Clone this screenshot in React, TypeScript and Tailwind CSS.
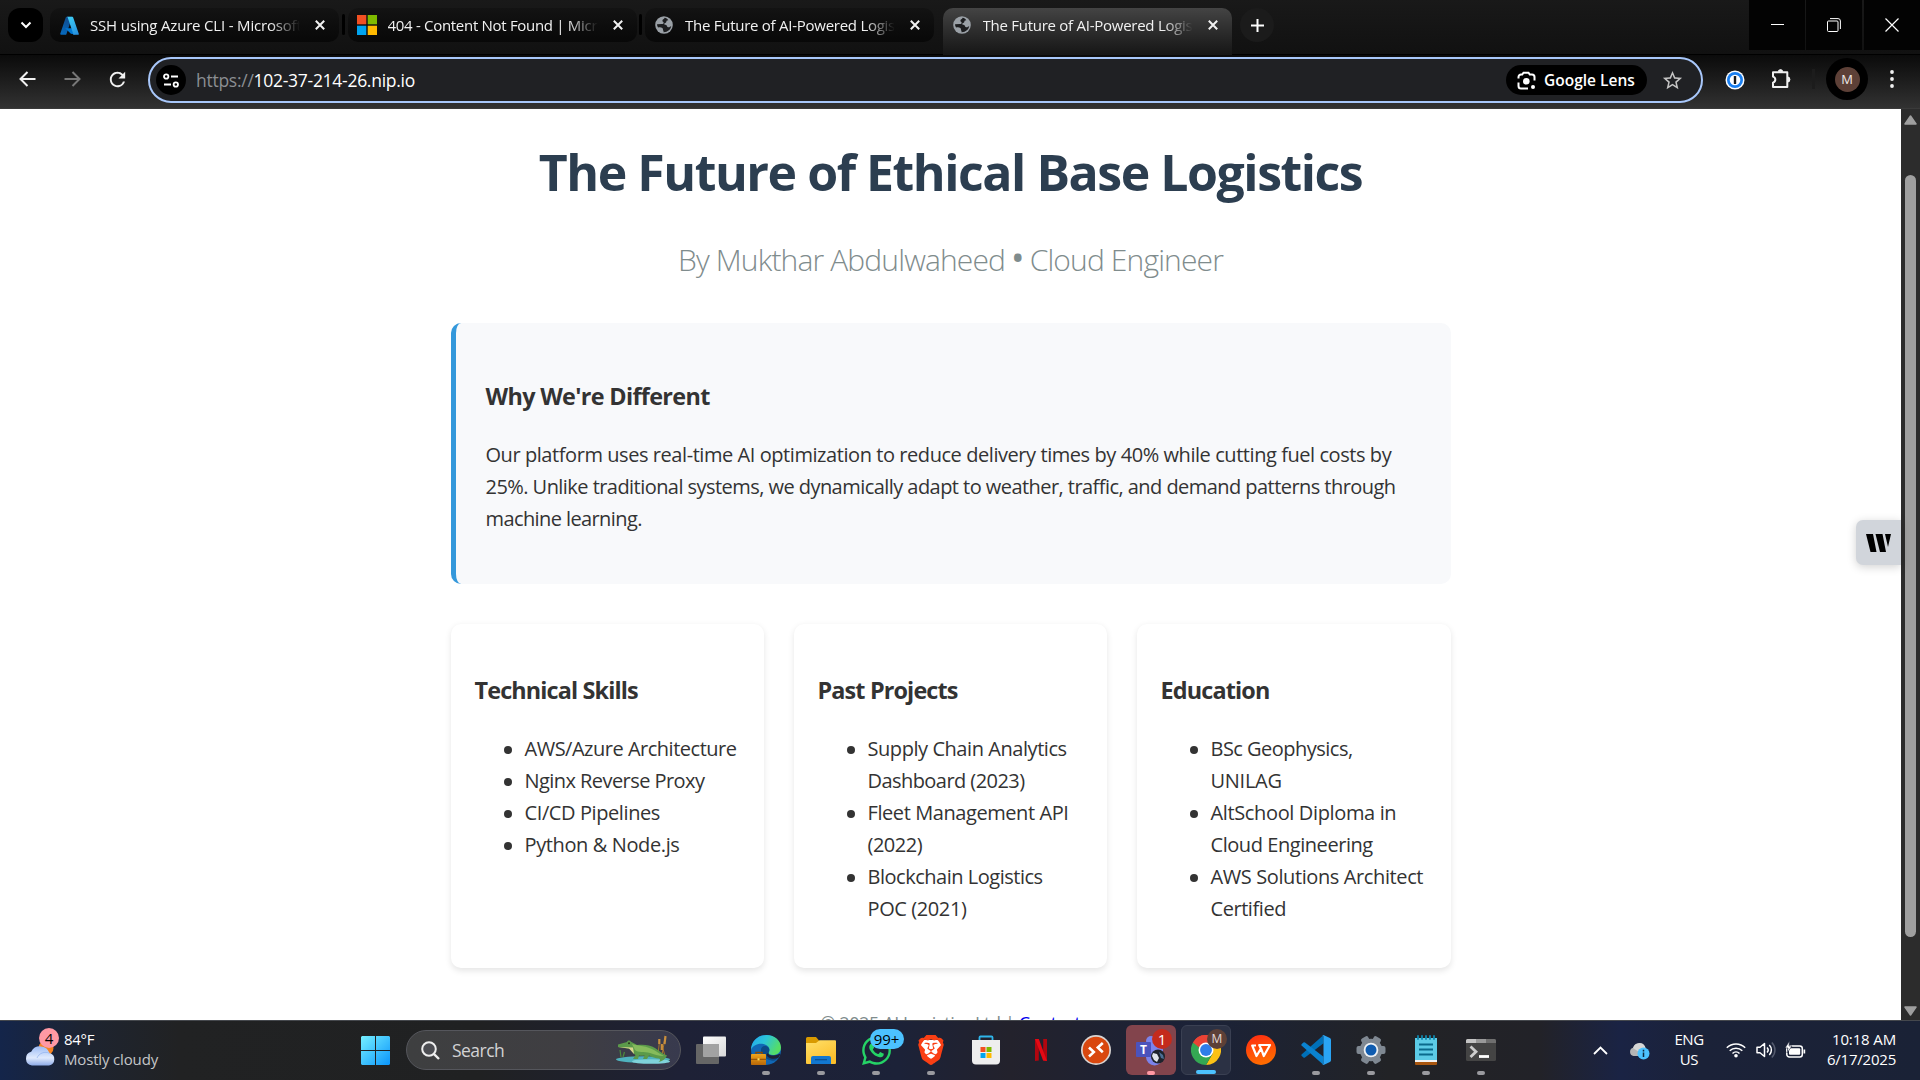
import React from 'react';
import { FaWhatsapp } from 'react-icons/fa';
import { SiBrave } from 'react-icons/si';
import { MdRefresh, MdStarBorder } from 'react-icons/md';

/* ---------- browser icons ---------- */

const AzureIcon = () => (
  <svg width="19" height="19" viewBox="0 0 96 96">
    <defs>
      <linearGradient id="azA" x1="0.6" y1="0" x2="0.3" y2="1">
        <stop offset="0" stopColor="#114a8b" />
        <stop offset="1" stopColor="#0669bc" />
      </linearGradient>
      <linearGradient id="azB" x1="0.3" y1="0" x2="0.7" y2="1">
        <stop offset="0" stopColor="#3ccbf4" />
        <stop offset="1" stopColor="#2892df" />
      </linearGradient>
    </defs>
    <path d="M33.3 4h28.4L32.3 91.8a4.5 4.5 0 0 1-4.3 3.1H5.9a4.5 4.5 0 0 1-4.3-6L29 7a4.5 4.5 0 0 1 4.3-3z" fill="url(#azA)" />
    <path d="M71 62H26l29 28 22 4z" fill="#0078d4" />
    <path d="M66.6 7a4.5 4.5 0 0 0-4.3-3H34.6a4.5 4.5 0 0 1 4.3 3l27.5 82a4.5 4.5 0 0 1-4.3 6h28a4.5 4.5 0 0 0 4.3-6z" fill="url(#azB)" />
  </svg>
);

const MicrosoftIcon = () => (
  <svg width="20" height="20" viewBox="0 0 20 20">
    <rect width="9.3" height="9.3" fill="#f25022" />
    <rect x="10.7" width="9.3" height="9.3" fill="#7fba00" />
    <rect y="10.7" width="9.3" height="9.3" fill="#00a4ef" />
    <rect x="10.7" y="10.7" width="9.3" height="9.3" fill="#ffb900" />
  </svg>
);

const GlobeIcon = () => (
  <svg width="18" height="18" viewBox="0 0 18 18">
    <circle cx="9" cy="9" r="8.8" fill="#9aa0a6" />
    <path d="M9.6 1.8c-.4 1.500-2.200 1.500-2.200 2.900 0 1.300 1.300.9 1.300 2.100 0 1-.9 1.400-2 1.300L2 8.200c.1 1.500.5 2.400 1.100 3.300 1.400-.3 3.100-.3 4.200.4 1.200.8.3 1.800.9 2.600.5.6.4 1.200.3 1.700 4.300.1 7.200-2.800 7.700-6.200-1.100.6-1.700 1.600-3 1.300-1.400-.4-.9-2-2.100-2.400-1-.3-2-.1-1.800-1.200.2-1 1.400-.8 1.900-1.500.5-.8-.1-1.400.9-1.700l1.200-.3C12.400 2.700 11.200 2 9.600 1.800z" fill="#1c1d1f" />
  </svg>
);

const CloseX = () => (
  <svg width="10" height="10" viewBox="0 0 10 10" stroke="#f1f1f1" strokeWidth="2" fill="none">
    <path d="M0.800 0.800l8.400 8.400M9.200 0.800l-8.400 8.400" />
  </svg>
);

const LensIcon = () => (
  <svg width="19" height="19" viewBox="0 0 19 19" fill="none" stroke="#fff" strokeWidth="2">
    <path d="M1.500 7.500V6a2.500 2.500 0 0 1 2.500-2.500h1.200L6.500 1.700h5l1.300 1.800H15A2.500 2.500 0 0 1 17.500 6v3.500M1.500 11.500V15A2.500 2.500 0 0 0 4 17.500h7" />
    <circle cx="9.300" cy="10.300" r="3.300" fill="#fff" stroke="none" />
    <circle cx="16" cy="16" r="2" fill="#fff" stroke="none" />
  </svg>
);

const PuzzleIcon = () => (
  <svg width="22" height="22" viewBox="0 0 22 22" fill="none" stroke="#f1f1f1" strokeWidth="2" strokeLinejoin="round">
    <path d="M2 4.200h14.300v14.800H2v-4.400a3.100 3.100 0 0 0 0-6z" />
    <path d="M7.300 3.500a2.200 2.200 0 0 1 4.400 0zM17 9.300a2.200 2.200 0 0 1 0 4.400z" fill="#f1f1f1" stroke="none" />
    <path d="M7.800 3.800a1.900 1.900 0 0 1 3.600 0M16.800 9.500a2 2 0 0 1 0 3.900" />
  </svg>
);

/* ---------- taskbar icons ---------- */

const WeatherIcon = () => (
  <svg width="34" height="38" viewBox="0 0 34 38">
    <defs>
      <linearGradient id="cl" x1="0" y1="0" x2="0" y2="1">
        <stop offset="0" stopColor="#9dbcf5" />
        <stop offset="0.6" stopColor="#dfeafd" />
        <stop offset="1" stopColor="#8eabe8" />
      </linearGradient>
    </defs>
    <circle cx="22" cy="17" r="7.500" fill="#f58220" />
    <path d="M8 34.500a7 7 0 0 1-.8-13.700A10 10 0 0 1 25.500 22 6.400 6.400 0 0 1 25 34.500z" fill="url(#cl)" />
    <path d="M13 27c2-5 8-7 12.500-4.700" stroke="#8fb0ee" strokeWidth="1" fill="none" opacity=".7" />
  </svg>
);

const StartIcon = () => (
  <svg width="29" height="29" viewBox="0 0 29 29">
    <defs>
      <linearGradient id="st" x1="0" y1="0" x2="29" y2="29" gradientUnits="userSpaceOnUse">
        <stop offset="0" stopColor="#76f0ff" />
        <stop offset="1" stopColor="#0a95fb" />
      </linearGradient>
    </defs>
    <path d="M1 0h13v14H0V1zM15 0h13l1 1v13H15zM0 15h14v14H1l-1-1zM15 15h14v13l-1 1H15z" fill="url(#st)" />
  </svg>
);

const CrocodileIcon = () => (
  <svg width="58" height="30" viewBox="0 0 58 30">
    <g stroke="#a8742c" strokeWidth="1" fill="none">
      <path d="M43 20L44.500 6M47 20L50 3M50 21L47 10" />
      <path d="M44.300 9V4M49.500 9L50.500 1M46.800 15V9" stroke="#c98f3d" strokeWidth="2.200" />
    </g>
    <path d="M6 22L5 15M8 22L9.500 17" stroke="#4d8a3d" strokeWidth="1.200" />
    <ellipse cx="28" cy="24.500" rx="27" ry="3.200" fill="#4fb3bf" />
    <ellipse cx="36" cy="26.500" rx="19" ry="2.300" fill="#7fd3da" />
    <path d="M3 9.500l9-2.500c1-2 3-1.800 4-.2 2 .8 3.500 2 6 3.200 6-.5 13-.5 18 3 4 2.800 7 5.500 12 7.500-1.500 3.500-5 6-8.500 6.500 2-1.500 2-3 .5-3.500-4-.2-7-1.200-10-3l-2 3.500h-4l1.500-3.500c-2 .3-4 .3-5.500 0L23 24h-5l2.500-4c-2-1-3.500-3.500-5-6L3 12z" fill="#5b9a4a" />
    <path d="M17 9c7 2 15 2 22 6 4 2.500 7 4.500 10 6-6 0-10-2-14-3-6-1.500-12 0-15-3z" fill="#86bb5c" />
    <path d="M3 12l11 1.500 5 5.500-1-6.500z" fill="#d9d68c" />
    <circle cx="14" cy="8.200" r="1" fill="#2a3a18" />
  </svg>
);

const TaskViewIcon = () => (
  <svg width="30" height="30" viewBox="0 0 30 30">
    <defs>
      <linearGradient id="tv" x1="0" y1="0" x2="1" y2="1">
        <stop offset="0" stopColor="#fff" />
        <stop offset="1" stopColor="#d8d8d8" />
      </linearGradient>
    </defs>
    <rect x="0" y="9" width="23" height="20" rx="1" fill="#666" />
    <rect x="7" y="1.500" width="23" height="20" rx="1" fill="url(#tv)" />
    <rect x="7" y="9" width="16" height="12.500" fill="#a2a2a2" />
  </svg>
);

const EdgeIcon = () => (
  <svg width="32" height="32" viewBox="0 0 32 32">
    <defs>
      <linearGradient id="ed1" x1="0" y1="0" x2="1" y2="0.4">
        <stop offset="0" stopColor="#22a5f0" />
        <stop offset="0.5" stopColor="#2cc5d8" />
        <stop offset="1" stopColor="#55dd66" />
      </linearGradient>
      <linearGradient id="cs" x1="0" y1="0" x2="0" y2="1">
        <stop offset="0" stopColor="#f0a51c" />
        <stop offset="1" stopColor="#b86708" />
      </linearGradient>
    </defs>
    <circle cx="16" cy="16" r="15" fill="#1167b4" />
    <path d="M1 16C1 7 8 1 16.500 1 25 1 31 7 31 13.500c0 5-4 7.500-8 7.500-3 0-5-1-4.500-2.300C20.500 16 19.500 12 15 10.500 9 8.500 3 11 1 16z" fill="url(#ed1)" />
    <path d="M11 17c-.5-4 3-6 6-4.500 2.500 1.300 3 4 1.500 6.200-1 2 2 3.300 5 3 3-.2 5-1 6.500-2.200-1 3-3 5.500-5 7-6 1-13-3-14-9.500z" fill="#0d4a86" />
    <path d="M18.500 18.500c-1 2 2 3.300 5 3 2.500-.2 4.500-.8 6-1.800l.8.800-2 3.500c-6 2-11 0-11.800-3.500z" fill="#1f2136" />
    <path d="M6 20.500v-2h6v2" fill="none" stroke="#8a4a05" strokeWidth="1.500" />
    <rect x="1" y="20" width="15" height="11" rx="0.800" fill="url(#cs)" />
    <path d="M1 25.300h15" stroke="#8a4a05" />
    <rect x="7.500" y="24.300" width="2" height="2" fill="#ffe05c" />
  </svg>
);

const FolderIcon = () => (
  <svg width="30" height="30" viewBox="0 0 30 30">
    <defs>
      <linearGradient id="fo" x1="0" y1="0" x2="0.6" y2="1">
        <stop offset="0" stopColor="#ffe06a" />
        <stop offset="1" stopColor="#fcbf2a" />
      </linearGradient>
    </defs>
    <path d="M0 3.500A1.500 1.500 0 0 1 1.500 2H10l3 3.500V12H0z" fill="#d99a00" />
    <path d="M0 8h10l3.500-2.800H29a1 1 0 0 1 1 1V28a1 1 0 0 1-1 1H1a1 1 0 0 1-1-1z" fill="url(#fo)" />
    <path d="M5 29v-6a2 2 0 0 1 2-2h16a2 2 0 0 1 2 2v6z" fill="#1277cf" />
    <path d="M9 24.700h12" stroke="#0b4f8f" strokeWidth="1.200" />
  </svg>
);

const WhatsAppTile = () => (
  <span className="relative flex">
    <FaWhatsapp size={33} color="#25d366" />
    <span className="absolute left-[10px] -top-[5px] h-5 w-[34px] rounded-[10px] bg-[#4cc2ff] text-center text-[15px] leading-5 text-black">99+</span>
  </span>
);

const BraveTile = () => (
  <span className="relative flex h-[30px] w-[30px] items-center justify-center">
    <svg className="absolute inset-0" width="30" height="30" viewBox="0 0 30 30">
      <path d="M7 5h16l3 6-4 13-7 5-7-5L4 11z" fill="#fff" />
    </svg>
    <SiBrave size={30} color="#fa3f14" className="relative" />
  </span>
);

const StoreIcon = () => (
  <svg width="30" height="30" viewBox="0 0 30 30">
    <path d="M8.500 6V2.500a1 1 0 0 1 1-1h11a1 1 0 0 1 1 1V6" fill="none" stroke="#2fb5ea" strokeWidth="1.800" />
    <path d="M1 5h28v20.500a4 4 0 0 1-4 4H5a4 4 0 0 1-4-4z" fill="#eeeeee" />
    <rect x="9.500" y="12" width="5" height="5" fill="#f25022" />
    <rect x="15.500" y="12" width="5" height="5" fill="#7fba00" />
    <rect x="9.500" y="18" width="5" height="5" fill="#00a4ef" />
    <rect x="15.500" y="18" width="5" height="5" fill="#ffb900" />
  </svg>
);

const NetflixIcon = () => (
  <svg width="12" height="22" viewBox="0 0 12 22">
    <path d="M0 0h3.800v21.500L0 22zM8.200 0H12v22l-3.800-.5z" fill="#b1060f" />
    <path d="M0 0h3.800L12 22l-3.900-.5z" fill="#e50914" />
  </svg>
);

const RemoteIcon = () => (
  <svg width="30" height="30" viewBox="0 0 30 30">
    <circle cx="15" cy="15" r="15" fill="#d9d5d3" />
    <circle cx="15" cy="15" r="13.300" fill="#d9480f" />
    <path d="M8 12.500l4.800 4.600L8 21.500M21.800 8l-5 4.500 5 4.700" fill="none" stroke="#fff" strokeWidth="2.600" />
  </svg>
);

const TeamsTile = () => (
  <span className="relative flex">
    <svg width="34" height="34" viewBox="0 0 34 34">
      <circle cx="17" cy="8" r="5" fill="#7b83eb" />
      <path d="M12 12h17v12a8.500 8.500 0 0 1-17 0z" fill="#7b83eb" />
      <rect x="2" y="9" width="15" height="15" rx="1" fill="#4b53bc" />
      <circle cx="24" cy="23.500" r="7" fill="#1d232c" />
      <path d="M19 20l4 1 2 4-2 4-3-2-2-4z" fill="#dfe5ea" />
      <path d="M25 19l4 3 1 4-3-1z" fill="#4a6f96" />
    </svg>
    <span className="absolute left-[2px] top-[9px] w-[15px] text-center text-[12px] font-bold leading-[15px] text-white">T</span>
    <span className="absolute left-[18px] -top-[4px] h-5 w-5 rounded-full bg-[#c42b1c] text-center text-[15px] leading-5 text-white">1</span>
  </span>
);

const ChromeTile = () => (
  <span className="relative flex">
    <svg width="30" height="30" viewBox="0 0 48 48">
      <path d="M24 24L3.200 12A24 24 0 0 1 44.800 12H24z" fill="#ea4335" />
      <path d="M44.800 12A24 24 0 0 1 24 48L34.400 30V12z" fill="#fbc116" />
      <path d="M3.200 12A24 24 0 0 0 24 48L34.400 30 24 26z" fill="#34a853" />
      <path d="M3.200 12L13.600 30 24 24V12z" fill="#34a853" />
      <path d="M3.200 12L13 20l11-8h20.800A24 24 0 0 0 3.200 12z" fill="#ea4335" />
      <circle cx="24" cy="24" r="12" fill="#fff" />
      <circle cx="24" cy="24" r="9.500" fill="#2f7de9" />
    </svg>
    <span className="absolute left-[16px] -top-[6px] h-5 w-5 rounded-full bg-[#5d4037] text-center text-[12px] leading-5 text-[#e4dcd9]">M</span>
  </span>
);

const WpsIcon = () => (
  <svg width="30" height="30" viewBox="0 0 30 30">
    <defs>
      <linearGradient id="wp" x1="0" y1="0" x2="0.3" y2="1">
        <stop offset="0" stopColor="#ff2a12" />
        <stop offset="1" stopColor="#ff6a00" />
      </linearGradient>
    </defs>
    <circle cx="15" cy="15" r="15" fill="url(#wp)" />
    <path d="M10 10.500H6.200L10.500 21 15 13.500 17.800 21l6.200-11H13.200l2.200 4.500" fill="none" stroke="#fff" strokeWidth="2.200" strokeLinejoin="round" />
  </svg>
);

const VsCodeIcon = () => (
  <svg width="30" height="30" viewBox="0 0 30 30">
    <path d="M0.800 19.200a1.200 1.200 0 0 0 0 1.800l1.600 1.400a1.200 1.200 0 0 0 1.600 0L22.500 8.300V.8a1.500 1.500 0 0 0-1.300.4z" fill="#0070b8" />
    <path d="M0.800 10.800a1.200 1.200 0 0 1 0-1.800l1.600-1.400a1.200 1.200 0 0 1 1.600 0L22.500 21.700v7.500a1.500 1.500 0 0 1-1.300-.4z" fill="#0a82cf" />
    <path d="M22.500 0l6.400 3A1.900 1.900 0 0 1 30 4.700v20.600a1.900 1.900 0 0 1-1.100 1.700l-6.400 3a1.800 1.800 0 0 1-2-.5c.7.7 2 .2 2-.8V1.300c0-1-1.300-1.500-2-.8a1.800 1.800 0 0 1 2-.5z" fill="#2aa4f4" />
  </svg>
);

const SettingsIcon = () => (
  <svg width="30" height="30" viewBox="0 0 30 30">
    <g fill="#7f8892">
      <rect x="11" y="0.500" width="8" height="29" rx="2" transform="rotate(30 15 15)" />
      <rect x="11" y="0.500" width="8" height="29" rx="2" transform="rotate(90 15 15)" />
      <rect x="11" y="0.500" width="8" height="29" rx="2" transform="rotate(150 15 15)" />
      <circle cx="15" cy="15" r="11.300" />
    </g>
    <circle cx="15" cy="15" r="7.300" fill="#eef1f4" />
    <circle cx="15" cy="15" r="5.500" fill="#0f5cb0" />
  </svg>
);

const NotepadIcon = () => (
  <svg width="24" height="30" viewBox="0 0 24 30">
    <rect x="1" y="24" width="22" height="6" rx="1" fill="#a8560f" />
    <rect x="1" y="24" width="22" height="3" fill="#f3f3f3" />
    <path d="M1 3h22v22H1z" fill="#5ccbe6" />
    <g stroke="#0a6a8c" strokeWidth="1.800">
      <path d="M5 9.500h14M5 14.500h14M5 19.500h14" />
    </g>
    <g stroke="#0f87ad" strokeWidth="1.800" strokeLinecap="round">
      <path d="M4 1v3M8 1v3M12 1v3M16 1v3M20 1v3" />
    </g>
  </svg>
);

const TerminalIcon = () => (
  <svg width="30" height="22" viewBox="0 0 30 22">
    <rect width="30" height="22" rx="1.500" fill="#444" />
    <path d="M0 4V1.500A1.500 1.500 0 0 1 1.500 0H10v4z" fill="#c4c4c4" />
    <path d="M10 0h10v4H10z" fill="#999" />
    <path d="M20 0h8.500A1.500 1.500 0 0 1 30 1.500V4H20z" fill="#6f6f6f" />
    <path d="M4.500 7.500l5.500 5.200-5.500 5.300" fill="none" stroke="#ccc" strokeWidth="2.800" />
    <path d="M13 17.500h10" stroke="#fff" strokeWidth="2.800" />
  </svg>
);

/* ---------- browser chrome ---------- */

type Tab = { icon: React.ReactNode; title: string; active?: boolean; spacing: string; separator?: boolean };

const TABS: Tab[] = [
  { icon: <AzureIcon />, title: 'SSH using Azure CLI - Microsoft', spacing: 'tracking-[-0.012em]', separator: true },
  { icon: <MicrosoftIcon />, title: '404 - Content Not Found | Micro', spacing: 'tracking-[-0.020em]', separator: true },
  { icon: <GlobeIcon />, title: 'The Future of AI-Powered Logist', spacing: 'tracking-[-0.0174em]' },
  { icon: <GlobeIcon />, title: 'The Future of AI-Powered Logist', spacing: 'tracking-[-0.0174em]', active: true },
];

const TabItem = ({ tab }: { tab: Tab }) => (
  <>
    <div
      className={
        'flex w-[289px] shrink-0 items-start ' +
        (tab.active
          ? 'h-[47px] rounded-t-[10px] bg-linear-to-b from-[#444] to-[#161616]'
          : 'h-[34px] rounded-[10px] bg-linear-to-b from-[#131313] to-[#080808]')
      }
    >
      <div className="ml-[9px] flex h-[34px] w-5 items-center justify-center">{tab.icon}</div>
      <div className="ml-[11px] h-[34px] w-[210px] overflow-hidden [mask-image:linear-gradient(to_right,black_180px,transparent_210px)]">
        <span className={'block text-[15px] leading-[34px] whitespace-nowrap text-[#f1f1f1] ' + tab.spacing}>{tab.title}</span>
      </div>
      <div className="ml-[15px] flex h-[34px] items-center"><CloseX /></div>
    </div>
    <div className="flex w-[8.500px] shrink-0 justify-center">
      {tab.separator && <div className="mt-[6px] h-[21px] w-[3px] rounded bg-black" />}
    </div>
  </>
);

const TabStrip = () => (
  <div className="flex h-[55px] items-start border-b border-black bg-linear-to-b from-[#191919] to-[#111]">
    <div className="flex grow items-start pt-2 pl-2">
      <div className="mr-[7px] flex h-[34px] w-[35px] shrink-0 items-center justify-center rounded-[12px] bg-black">
        <svg width="12" height="8" viewBox="0 0 12 8" fill="none" stroke="#fff" strokeWidth="2"><path d="M1.500 1.500L6 6l4.500-4.500" /></svg>
      </div>
      {TABS.map((t, i) => <TabItem key={i} tab={t} />)}
      <div className="flex h-[34px] w-[34px] items-center justify-center rounded-full bg-[#1b1b1b]">
        <svg width="13" height="13" viewBox="0 0 13 13" stroke="#fff" strokeWidth="2"><path d="M6.500 0v13M0 6.500h13" /></svg>
      </div>
    </div>
    <div className="flex h-[50px] w-[171px] gap-px">
      <div className="flex w-14 items-center justify-center bg-[#030303]">
        <svg width="13" height="13" viewBox="0 0 13 13" stroke="#fff"><path d="M0 5.500h13" /></svg>
      </div>
      <div className="flex w-14 items-center justify-center bg-[#030303]">
        <svg width="14" height="14" viewBox="0 0 14 14" fill="none" stroke="#fff"><rect x="0.500" y="3" width="10.500" height="10.500" rx="1" /><path d="M3 .6h8a2.400 2.400 0 0 1 2.400 2.400v8" /></svg>
      </div>
      <div className="ml-px flex w-14 items-center justify-center bg-[#030303]">
        <svg width="14" height="14" viewBox="0 0 14 14" stroke="#fff" strokeWidth="1.200"><path d="M.5.5l13 13M13.500.5l-13 13" /></svg>
      </div>
    </div>
  </div>
);

const Arrow = ({ flip, color }: { flip?: boolean; color: string }) => (
  <svg width="17" height="16" viewBox="0 0 17 16" fill="none" stroke={color} strokeWidth="2" className={flip ? 'rotate-180' : ''}>
    <path d="M16.500 8H1.800M8.500 1L1.500 8l7 7" />
  </svg>
);

const Toolbar = () => (
  <div className="flex h-[54px] items-center border-b border-[#3a3a3a] bg-linear-to-b from-[#0b0b0b] to-[#323232] pb-[5px]">
    <div className="ml-[19px] flex w-[17px]"><Arrow color="#f1f1f1" /></div>
    <div className="ml-[28px] flex w-[17px]"><Arrow color="#777" flip /></div>
    <div className="ml-[25px] flex w-[22px]"><MdRefresh size={23} color="#f1f1f1" className="shrink-0" /></div>
    <div className="mt-[2px] ml-[20px] flex h-[46px] w-[1555px] items-center rounded-full border-[2.500px] border-[#a8c7fa] bg-[#202124] pl-[6px]">
      <div className="flex h-[30px] w-[30px] items-center justify-center rounded-full bg-black">
        <svg width="16" height="15" viewBox="0 0 16 15" fill="none" stroke="#fff" strokeWidth="1.800"><circle cx="3.200" cy="3.500" r="2.200" /><path d="M8 3.500h7M1 11.500h7" /><circle cx="12.800" cy="11.500" r="2.200" /></svg>
      </div>
      <div className="ml-[10px] flex grow text-[17.500px] leading-10 text-white">
        <span className="tracking-[-0.015em] text-[#8b8e92]">https://</span>
        <span className="tracking-[-0.0162em]">102-37-214-26.nip.io</span>
      </div>
      <div className="flex h-[30px] w-[141px] items-center rounded-full bg-black pl-[11px]">
        <LensIcon />
        <span className="ml-2 text-[15.500px] leading-[30px] font-semibold whitespace-nowrap text-white">Google Lens</span>
      </div>
      <MdStarBorder size={23} color="#c4c4c4" className="mr-[17px] ml-[14px] shrink-0" />
    </div>
    <svg width="20" height="20" viewBox="0 0 20 20" className="ml-[22px] mt-[2px]">
      <circle cx="10" cy="10" r="9.500" fill="#fff" />
      <circle cx="10" cy="10" r="8" fill="#1a7ff0" />
      <circle cx="10" cy="10" r="5.300" fill="#fff" />
      <rect x="8.800" y="6" width="2.400" height="8" rx="0.600" fill="#1a1a1a" />
    </svg>
    <div className="ml-[26px]"><PuzzleIcon /></div>
    <div className="ml-[19px] h-5 w-[3px] bg-[#1c1c1c]" />
    <div className="ml-[11px] flex h-[42px] w-[42px] items-center justify-center rounded-full bg-black">
      <div className="h-[25px] w-[25px] rounded-full bg-[#5d4037] text-center text-[13px] leading-[25px] text-[#efe9e7]">M</div>
    </div>
    <svg width="6" height="20" viewBox="0 0 6 20" fill="#f1f1f1" className="ml-[21px]"><circle cx="3" cy="3" r="1.900" /><circle cx="3" cy="10" r="1.900" /><circle cx="3" cy="17" r="1.900" /></svg>
  </div>
);

/* ---------- page ---------- */

type Line = { text: string; spacing: string; bullet?: boolean };
type CardData = { title: string; titleSpacing: string; width: string; lines: Line[] };

const CARDS: CardData[] = [
  {
    title: 'Technical Skills', titleSpacing: 'tracking-[-0.037em]', width: 'w-[313px]',
    lines: [
      { text: 'AWS/Azure Architecture', spacing: 'tracking-[-0.0245em]', bullet: true },
      { text: 'Nginx Reverse Proxy', spacing: 'tracking-[-0.028em]', bullet: true },
      { text: 'CI/CD Pipelines', spacing: 'tracking-[-0.020em]', bullet: true },
      { text: 'Python & Node.js', spacing: 'tracking-[-0.019em]', bullet: true },
    ],
  },
  {
    title: 'Past Projects', titleSpacing: 'tracking-[-0.0366em]', width: 'w-[313px]',
    lines: [
      { text: 'Supply Chain Analytics', spacing: 'tracking-[-0.022em]', bullet: true },
      { text: 'Dashboard (2023)', spacing: 'tracking-[-0.028em]' },
      { text: 'Fleet Management API', spacing: 'tracking-[-0.021em]', bullet: true },
      { text: '(2022)', spacing: 'tracking-[-0.024em]' },
      { text: 'Blockchain Logistics', spacing: 'tracking-[-0.024em]', bullet: true },
      { text: 'POC (2021)', spacing: 'tracking-[-0.020em]' },
    ],
  },
  {
    title: 'Education', titleSpacing: 'tracking-[-0.036em]', width: 'w-[314px]',
    lines: [
      { text: 'BSc Geophysics,', spacing: 'tracking-[-0.026em]', bullet: true },
      { text: 'UNILAG', spacing: 'tracking-[-0.014em]' },
      { text: 'AltSchool Diploma in', spacing: 'tracking-[-0.018em]', bullet: true },
      { text: 'Cloud Engineering', spacing: 'tracking-[-0.022em]' },
      { text: 'AWS Solutions Architect', spacing: 'tracking-[-0.0196em]', bullet: true },
      { text: 'Certified', spacing: 'tracking-[-0.022em]' },
    ],
  },
];

const Page = () => (
  <main className="flex grow flex-col items-center overflow-hidden bg-white text-[20px] leading-8 text-[#333]">
    <h1 className="mt-[23px] text-[50px] leading-[80px] font-bold tracking-[-0.0292em] whitespace-nowrap text-[#2c3e50]">The Future of Ethical Base Logistics</h1>
    <p className="mt-[24px] text-[30px] leading-[48px] font-light tracking-[-0.0286em] whitespace-nowrap text-[#7f8c8d]">
      By Mukthar Abdulwaheed <span className="mx-[-1px] text-[36px] leading-none font-normal">•</span> Cloud Engineer
    </p>
    <section className="mt-[39px] h-[261px] w-[1000px] shrink-0 rounded-[10px] border-l-[5px] border-[#3498db] bg-[#f8f9fb] pt-[55px] pl-[30px] whitespace-nowrap">
      <h3 className="mb-[24px] text-[23.400px] leading-[37.400px] font-bold tracking-[-0.0287em]">Why We're Different</h3>
      <p>
        <span className="block tracking-[-0.0217em]">Our platform uses real-time AI optimization to reduce delivery times by 40% while cutting fuel costs by</span>
        <span className="block tracking-[-0.0275em]">25%. Unlike traditional systems, we dynamically adapt to weather, traffic, and demand patterns through</span>
        <span className="block tracking-[-0.0299em]">machine learning.</span>
      </p>
    </section>
    <div className="mt-10 flex h-[344px] w-[1000px] shrink-0 justify-between">
      {CARDS.map((c) => (
        <section key={c.title} className={'rounded-[10px] bg-white pt-[48px] pl-6 whitespace-nowrap shadow-[0_2.5px_6px_rgba(0,0,0,0.1)] ' + c.width}>
          <h3 className={'mb-[24px] text-[23.400px] leading-[37.400px] font-bold ' + c.titleSpacing}>{c.title}</h3>
          <ul className="pl-[29px]">
            {c.lines.map((l) => (
              <li key={l.text} className="flex items-center">
                <span className={'mt-[2px] mr-[13px] h-2 w-2 rounded-full ' + (l.bullet ? 'bg-[#333]' : '')} />
                <span className={l.spacing}>{l.text}</span>
              </li>
            ))}
          </ul>
        </section>
      ))}
    </div>
    <footer className="mt-[41px] h-[29px] shrink-0 text-[18px] leading-[29px] tracking-[-0.0223em] whitespace-nowrap text-[#7f8c8d]">
      © 2025 AI Logistics Ltd | <a className="text-[#0000ee] underline">Contact</a>
    </footer>
  </main>
);

const Scrollbar = () => (
  <div className="flex w-[19px] flex-col items-center bg-[#2c2c2c]">
    <svg width="13" height="10" viewBox="0 0 13 10" className="mt-[6px]"><path d="M6.500 1L12 9H1z" fill="#9f9f9f" stroke="#9f9f9f" strokeWidth="1.500" strokeLinejoin="round" /></svg>
    <div className="mt-[50px] h-[762px] w-[11px] rounded-full bg-[#9f9f9f]" />
    <svg width="13" height="10" viewBox="0 0 13 10" className="mt-[69px]"><path d="M6.500 9L12 1H1z" fill="#9f9f9f" stroke="#9f9f9f" strokeWidth="1.500" strokeLinejoin="round" /></svg>
  </div>
);

const SideWidget = () => (
  <div className="absolute top-[411px] right-[19px] flex h-[45px] w-[45px] items-center rounded-l-[7px] bg-[#d1d5db] pl-[10px] shadow-[0_2px_10px_rgba(0,0,0,0.18)]">
    <svg width="26" height="18" viewBox="0 0 26 18">
      <path d="M0 0h7l3.500 18h-6zM9.500 0h7L20 18h-6zM19 0h6l-3 13z" fill="#000" />
    </svg>
  </div>
);

/* ---------- taskbar ---------- */

type App = { icon: React.ReactNode; mark?: string; tile?: string };

const APPS: App[] = [
  { icon: <TaskViewIcon /> },
  { icon: <EdgeIcon />, mark: 'w-2 bg-[#9a9a9f]' },
  { icon: <FolderIcon />, mark: 'w-2 bg-[#9a9a9f]' },
  { icon: <WhatsAppTile />, mark: 'w-2 bg-[#9a9a9f]' },
  { icon: <BraveTile />, mark: 'w-2 bg-[#9a9a9f]' },
  { icon: <StoreIcon /> },
  { icon: <NetflixIcon /> },
  { icon: <RemoteIcon /> },
  { icon: <TeamsTile />, mark: 'w-2 bg-[#ff99a4]', tile: 'bg-[#82444c]' },
  { icon: <ChromeTile />, mark: 'w-5 bg-[#4cc2ff]', tile: 'bg-[#2b3144] border border-[#3a4052]' },
  { icon: <WpsIcon /> },
  { icon: <VsCodeIcon />, mark: 'w-2 bg-[#9a9a9f]' },
  { icon: <SettingsIcon />, mark: 'w-2 bg-[#9a9a9f]' },
  { icon: <NotepadIcon />, mark: 'w-2 bg-[#9a9a9f]' },
  { icon: <TerminalIcon />, mark: 'w-2 bg-[#9a9a9f]' },
];

const Taskbar = () => (
  <div className="flex h-[61px] items-center border-t border-[#45484d] pb-[1px] text-[15px] text-white [background:linear-gradient(90deg,#14254a_0,#1e2430_90px,#212223_180px,#202122_480px,#1e2136_680px,#1c2238_900px,#23222c_1010px,#1b2238_1200px,#222326_1390px,#222228_1540px,#1a2344_1620px,#1b2238_1700px,#1a2236_1920px)]">
    <div className="relative ml-6 flex"><WeatherIcon />
      <span className="absolute -top-[3px] left-[15px] h-5 w-5 rounded-full bg-[#ff99a4] text-center text-[15px] leading-5 text-black">4</span>
    </div>
    <div className="mb-[3px] ml-[6px] flex w-[297px] flex-col leading-5">
      <span className="tracking-[-0.02em]">84°F</span>
      <span className="tracking-[-0.0107em] text-[#c5c6c8]">Mostly cloudy</span>
    </div>
    <StartIcon />
    <div className="ml-4 flex h-10 w-[275px] items-center rounded-full border border-[#55565c] bg-[linear-gradient(90deg,#3e3f40,#3f3e42_60%,#383a4e)] pl-[14px]">
      <svg width="19" height="19" viewBox="0 0 19 19" fill="none" stroke="#eee" strokeWidth="2"><circle cx="8" cy="8" r="6.800" fill="#4c4d52" /><path d="M12.800 12.800l5.200 5.200" strokeWidth="2.400" /></svg>
      <span className="ml-[12px] grow text-[17.500px] leading-8 tracking-[-0.030em] text-[#d2d2d4]">Search</span>
      <span className="mr-[7px]"><CrocodileIcon /></span>
    </div>
    <div className="ml-[5px] flex gap-[5px]">
      {APPS.map((a, i) => (
        <div key={i} className={'relative flex h-[50px] w-[50px] items-center justify-center rounded-[6px] ' + (a.tile ?? '')}>
          {a.icon}
          {a.mark && <span className={'absolute bottom-0 h-1 rounded-full ' + a.mark} />}
        </div>
      ))}
    </div>
    <svg width="15" height="9" viewBox="0 0 15 9" fill="none" stroke="#fff" strokeWidth="1.800" className="ml-[87px]"><path d="M1 8l6.500-6.500L14 8" /></svg>
    <svg width="22" height="18" viewBox="0 0 22 18" className="ml-[21px] mt-[2px]">
      <path d="M4.500 14a4.200 4.200 0 0 1-.3-8.200A6.500 6.500 0 0 1 16 4.500L18 14z" fill="#b5b5b5" />
      <path d="M4 6a6.500 6.500 0 0 1 12-1.500l1 3L10 10z" fill="#d6d6d6" />
      <circle cx="14.500" cy="11.500" r="6" fill="#4cc2ff" />
      <path d="M14.500 10.500v4.500M14.500 7.800v1.600" stroke="#10283c" strokeWidth="1.500" />
    </svg>
    <div className="mb-[2px] ml-[22px] flex w-[32px] flex-col items-center leading-5 tracking-[-0.03em]"><span>ENG</span><span>US</span></div>
    <svg width="20" height="16" viewBox="0 0 20 16" fill="none" stroke="#fff" strokeWidth="1.500" className="ml-[21px]">
      <path d="M.8 5.800a13 13 0 0 1 18.400 0M3.700 8.700a9 9 0 0 1 12.600 0M6.500 11.500a5 5 0 0 1 7 0" />
      <circle cx="10" cy="13.700" r="1.800" fill="#fff" stroke="none" />
    </svg>
    <svg width="20" height="18" viewBox="0 0 20 18" fill="none" stroke="#fff" strokeWidth="1.500" className="ml-[10px]">
      <path d="M1 6.300h3L8.500 2.500v13L4 11.700H1z" strokeLinejoin="round" />
      <path d="M11 6.500a3.600 3.600 0 0 1 0 5M13.300 4a7 7 0 0 1 0 10" />
      <path d="M15.800 1.500a10.500 10.500 0 0 1 0 15" stroke="#555b6e" />
    </svg>
    <svg width="21" height="18" viewBox="0 0 21 18" className="ml-[9px]">
      <rect x="1.800" y="5" width="15.500" height="11" rx="2.500" fill="none" stroke="#fff" strokeWidth="1.500" />
      <rect x="4" y="7.200" width="11.200" height="6.600" rx="1" fill="#fff" />
      <path d="M18.500 8.500h1.700v4h-1.700z" fill="#fff" />
      <path d="M4.500 0L0 7h3l-1 5 5-7H4z" fill="#fff" stroke="#1b2238" strokeWidth="0.600" />
    </svg>
    <div className="mb-[3px] ml-[18px] flex w-[72px] flex-col items-end leading-5 whitespace-nowrap">
      <span className="tracking-[-0.0094em]">10:18 AM</span>
      <span className="tracking-[-0.0152em]">6/17/2025</span>
    </div>
  </div>
);

export default function App() {
  return (
    <div className="flex h-[1080px] w-[1920px] flex-col overflow-hidden font-['Open_Sans',sans-serif]">
      <TabStrip />
      <Toolbar />
      <div className="relative flex h-[911px] shrink-0 overflow-hidden">
        <Page />
        <Scrollbar />
        <SideWidget />
      </div>
      <Taskbar />
    </div>
  );
}
